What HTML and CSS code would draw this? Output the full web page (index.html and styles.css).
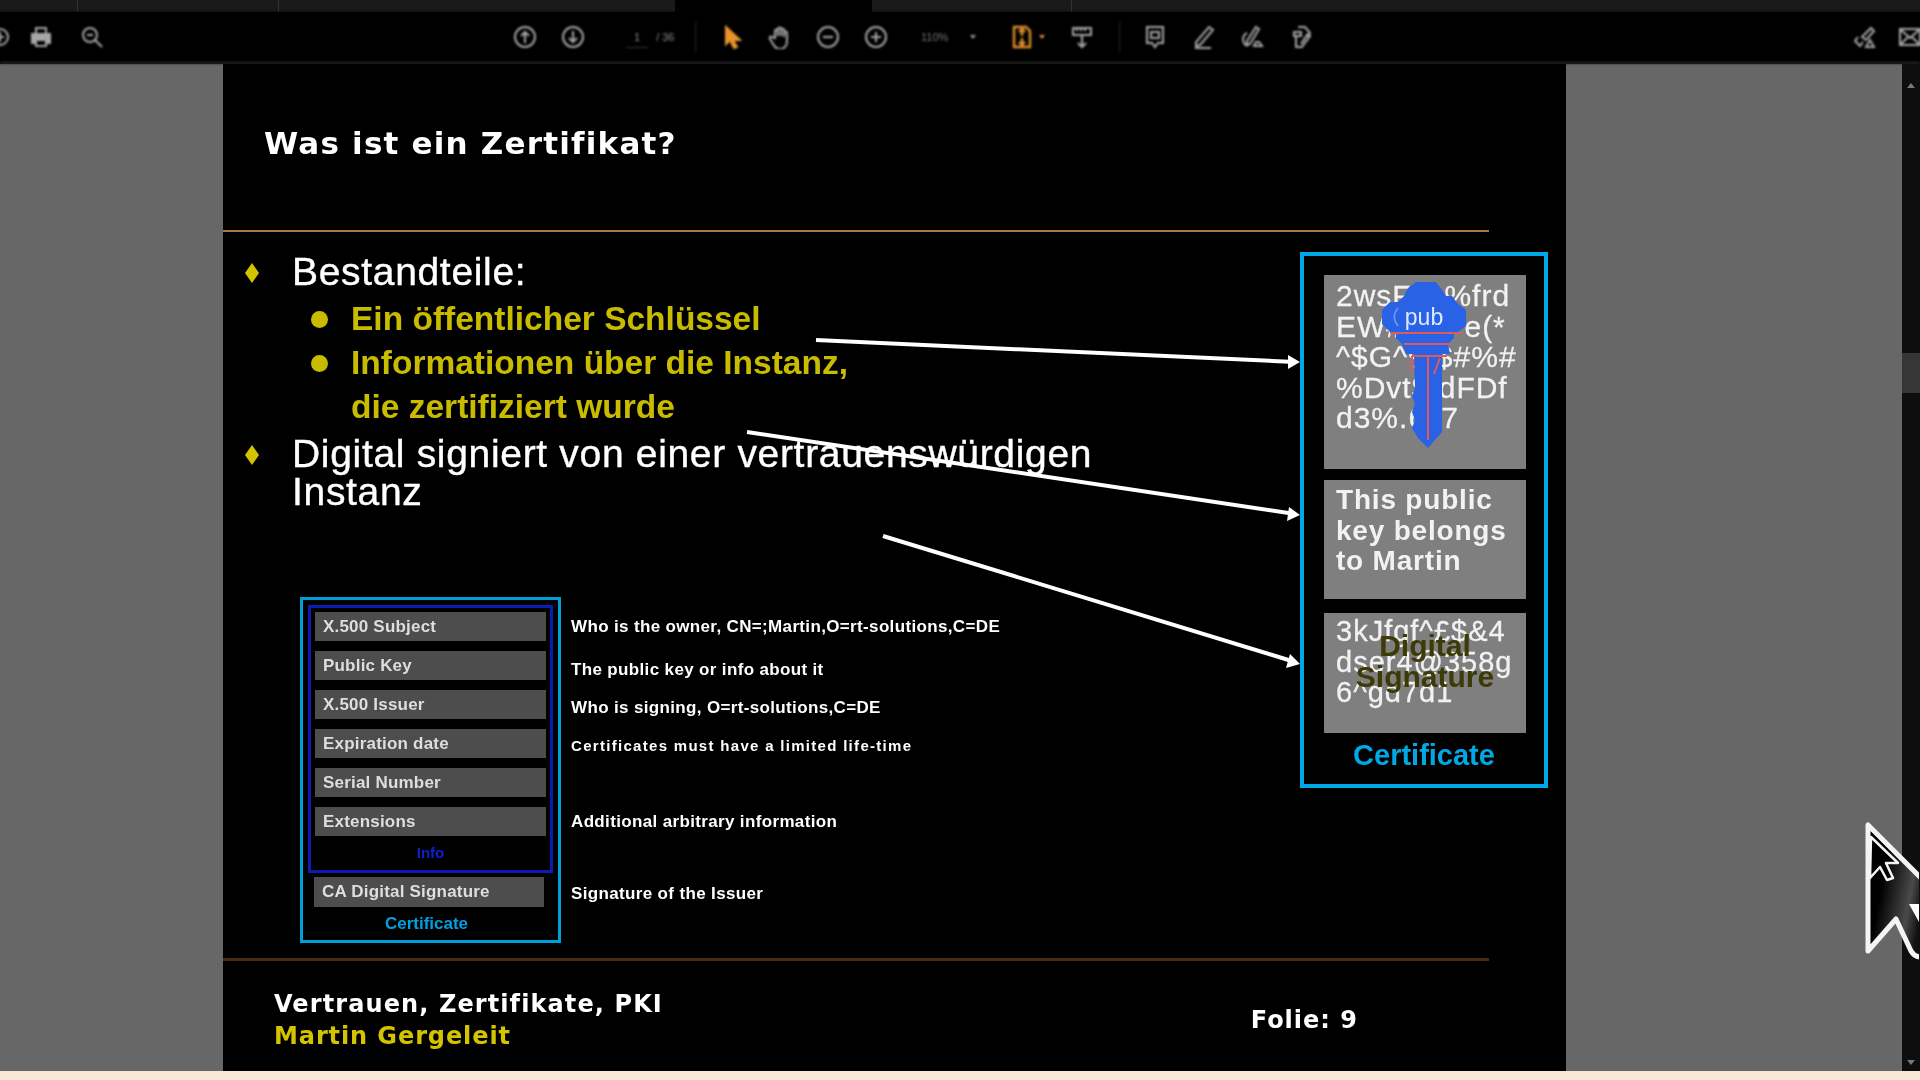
FILE: index.html
```html
<!DOCTYPE html>
<html lang="de">
<head>
<meta charset="utf-8">
<title>Was ist ein Zertifikat?</title>
<link rel="stylesheet" href="styles.css">
</head>
<body>
<div class="app">
  <div class="tabs">
    <div class="tab tab-a"></div>
    <div class="tab tab-b"></div>
    <div class="tab tab-c"></div>
    <div class="tab tab-active"></div>
    <div class="tab tab-d"></div>
    <div class="tab tab-e"></div>
  </div>
  <div class="toolbar">
    <div class="tool-group group-left">
      <svg class="icon" viewBox="0 0 24 24"><circle cx="12" cy="12" r="8"/><path d="M12 7v10M8 12h8"/></svg>
      <svg class="icon" viewBox="0 0 24 24"><path class="fill" d="M3 9h18v9h-3v-3H6v3H3z"/><path d="M7 9V3h10v6M7 15h10v6H7z"/></svg>
      <svg class="icon icon-search" viewBox="0 0 24 24"><circle cx="10" cy="10" r="7"/><path d="M15 15l7 7M7 10h6"/></svg>
    </div>
    <div class="tool-group group-nav">
      <svg class="icon" viewBox="0 0 24 24"><circle cx="12" cy="12" r="10"/><path d="M12 18V7M8 11l4-4 4 4"/></svg>
      <svg class="icon" viewBox="0 0 24 24"><circle cx="12" cy="12" r="10"/><path d="M12 6v11M8 13l4 4 4-4"/></svg>
    </div>
    <div class="page-field"><span class="page-now">1</span><span class="page-total">/ 36</span></div>
    <div class="tool-sep"></div>
    <div class="tool-group group-view">
      <svg class="icon" viewBox="0 0 24 24"><path class="orange" d="M6 2l14 13h-7l4 7-3 1-4-8-4 4z"/></svg>
      <svg class="icon" viewBox="0 0 24 24"><path d="M7 13V6a1.5 1.5 0 0 1 3 0v5-7a1.500 1.500 0 0 1 3 0v7-6a1.500 1.500 0 0 1 3 0v7-4a1.500 1.500 0 0 1 3 0v8c0 5-3 8-7 8s-5-2-7-5l-3-5c-1-2 1-3 2-2z"/></svg>
      <svg class="icon" viewBox="0 0 24 24"><circle cx="12" cy="12" r="10"/><path d="M7 12h10"/></svg>
      <svg class="icon" viewBox="0 0 24 24"><circle cx="12" cy="12" r="10"/><path d="M7 12h10M12 7v10"/></svg>
    </div>
    <div class="zoom-field"><span>110%</span><span class="caret"></span></div>
    <div class="fit-tool">
      <svg class="icon" viewBox="0 0 24 24"><path class="stroke-orange" d="M4 2h12l4 4v16H4zM9 7l3-3 3 3M12 4v7M9 17l3 3 3-3M12 20v-7"/></svg>
      <span class="caret caret-orange"></span>
    </div>
    <svg class="icon icon-ruler" viewBox="0 0 24 24"><path d="M3 3h18v7H3zM7 3v3M11 3v3M15 3v3M12 10v12M8 18l4 4 4-4"/></svg>
    <div class="tool-sep sep-two"></div>
    <div class="tool-group group-comment">
      <svg class="icon" viewBox="0 0 24 24"><path d="M4 2h16v16h-5l-3 4-3-4H4zM8 7h8v6H8z"/></svg>
      <svg class="icon" viewBox="0 0 24 24"><path d="M17 2l4 3L8 20l-4 1 0-4zM3 23h16"/></svg>
      <svg class="icon" viewBox="0 0 24 24"><path d="M15 2l3 2-9 15-3 1v-4zM6 8a7 7 0 0 0 1 13M13 21h8l-3-4h-3z"/></svg>
      <svg class="icon" viewBox="0 0 24 24"><path d="M8 2h7l5 6-3 3M4 7h7v4H4zM6 11v11h6l8-11-3-1-6 9"/></svg>
    </div>
    <div class="tool-group group-right">
      <svg class="icon" viewBox="0 0 24 24"><path d="M19 3l3 3-8 9-4-3zM6 12l-3 4 5 5 3-4M14 22l4-7 4 7z"/></svg>
      <svg class="icon" viewBox="0 0 24 24"><path d="M2 4h20v16H2zM3 5l9 8 9-8M3 19l7-7M21 19l-7-7"/></svg>
    </div>
  </div>

  <div class="viewer">
    <div class="page-area">
      <section class="slide">
        <header class="slide-head">
          <h1 class="slide-title">Was ist ein Zertifikat?</h1>
        </header>

        <div class="slide-body">
          <div class="slide-left">
            <div class="point"><span class="diamond"></span>Bestandteile:</div>
            <div class="sub sub-first"><span class="dot"></span>Ein öffentlicher Schlüssel</div>
            <div class="sub"><span class="dot"></span>Informationen über die Instanz,</div>
            <div class="sub">die zertifiziert wurde</div>
            <div class="point point-two"><span class="diamond"></span>Digital signiert von einer vertrauenswürdigen<br>Instanz</div>

            <div class="fields">
              <div class="cert-outer">
                <div class="cert-info">
                  <div class="field">X.500 Subject</div>
                  <div class="field">Public Key</div>
                  <div class="field">X.500 Issuer</div>
                  <div class="field">Expiration date</div>
                  <div class="field">Serial Number</div>
                  <div class="field">Extensions</div>
                  <div class="info-label">Info</div>
                </div>
                <div class="field field-ca">CA Digital Signature</div>
                <div class="cert-label">Certificate</div>
              </div>
              <div class="notes">
                <div class="note">Who is the owner, CN=;Martin,O=rt-solutions,C=DE</div>
                <div class="note">The public key or info about it</div>
                <div class="note">Who is signing, O=rt-solutions,C=DE</div>
                <div class="note note-small">Certificates must have a limited life-time</div>
                <div class="note">Additional arbitrary information</div>
                <div class="note">Signature of the Issuer</div>
              </div>
            </div>
          </div>

          <aside class="cert-card">
            <div class="cert-box box-key">
              <div>2wsF#^%frd</div>
              <div>EW#$%^e(*</div>
              <div>^$G^%$#%#</div>
              <div>%Dvt$.dFDf</div>
              <div>d3%.6^7</div>
              <svg class="key" viewBox="0 0 84 166">
                <path class="key-blue" d="M26 6L34 0H54L60 8 64 14H70L76 22 84 28V44L76 50H72V56L66 62 68 72H60V150L46 166 36 156 30 146 33 138 30 130 33 122 30 114 33 106 32 72H24L20 62 14 56V50H8L0 42V28L8 20H16L22 14Z"/>
                <path class="key-red" d="M8 51H80M22 62H68M30 74H65M30 74V90M46 74V158M58 76L52 92"/>
                <path class="key-line" d="M16 26C11 32 11 38 16 44"/>
              </svg>
              <span class="key-text">pub</span>
            </div>
            <div class="cert-box box-text">
              <div>This public</div>
              <div>key belongs</div>
              <div>to Martin</div>
            </div>
            <div class="cert-box box-sign">
              <div>3kJfgf^£$&amp;4</div>
              <div>dser4@358g</div>
              <div>6^gd7d1</div>
              <div class="sign-over">Digital<br>Signature</div>
            </div>
            <div class="card-label">Certificate</div>
          </aside>
        </div>

        <footer class="slide-foot">
          <div class="foot-left">
            <div class="foot-title">Vertrauen, Zertifikate, PKI</div>
            <div class="foot-author">Martin Gergeleit</div>
          </div>
          <div class="foot-page">Folie: 9</div>
        </footer>

        <svg class="arrows" viewBox="0 0 1343 1007">
          <path d="M593 276L1072 298"/>
          <path d="M524 368L1072 450"/>
          <path d="M660 472L1072 598"/>
          <path class="head" d="M1077 298L1065 291V305Z"/>
          <path class="head" d="M1077 451L1066 443L1064 457Z"/>
          <path class="head" d="M1077 600L1067 590L1063 604Z"/>
        </svg>
      </section>
    </div>
    <div class="scrollbar">
      <span class="scroll-arrow arrow-up"></span>
      <span class="scroll-thumb"></span>
      <span class="scroll-arrow arrow-down"></span>
    </div>
  </div>
  <div class="statusbar"></div>

  <svg class="cursor" viewBox="0 0 54 140">
    <defs>
      <linearGradient id="cursorShade" x1="0" y1="0" x2="1" y2="0.4">
        <stop offset="0.35" stop-color="#000"/>
        <stop offset="0.8" stop-color="#4a4a4a"/>
        <stop offset="1" stop-color="#111"/>
      </linearGradient>
    </defs>
    <path class="cursor-big" d="M3 3V129L31 97 46 129C50 136 56 136 62 134V62Z"/>
    <path class="cursor-wedge" d="M44 82H54V100Z"/>
    <path class="cursor-small" d="M6 15L33 41H21L28 56 22 58 15 45 5 56Z"/>
  </svg>
</div>
</body>
</html>
```
FILE: styles.css
```css
* { box-sizing: border-box; }
html, body { margin: 0; height: 100%; background: #000; overflow: hidden; }
.app {
  position: relative;
  width: 1920px;
  height: 1080px;
  display: flex;
  flex-direction: column;
  overflow: hidden;
  font-family: "Liberation Sans", Arial, sans-serif;
}

/* tab strip */
.tabs { height: 12px; display: flex; background: #1a1a1a; }
.tab { height: 12px; border-right: 1px solid #333; }
.tab-a { width: 78px; }
.tab-b { width: 201px; }
.tab-c { width: 396px; border-right: 0; }
.tab-active { width: 197px; background: #000; border-right: 0; }
.tab-d { width: 200px; }
.tab-e { flex: 1; border-right: 0; }

/* toolbar */
.toolbar {
  height: 52px;
  display: flex;
  align-items: center;
  background: #000;
  border-bottom: 2px solid #2b2b2b;
  filter: blur(1px);
  color: #8a8a8a;
}
.tool-group { display: flex; align-items: center; gap: 24px; }
.icon { width: 24px; height: 24px; flex: none; }
.icon path, .icon circle { fill: none; stroke: #a6a6a6; stroke-width: 2; }
.icon .fill { fill: #a6a6a6; }
.icon .orange { fill: #e8922a; stroke: #e8922a; }
.icon .stroke-orange { stroke: #e0902c; stroke-width: 2.4; }
.group-left { margin-left: -12px; gap: 17px; }
.icon-search { margin-left: 10px; }
.group-nav { margin-left: 409px; }
.page-field {
  width: 48px;
  margin-left: 41px;
  display: flex;
  gap: 14px;
  font-size: 11px;
  line-height: 20px;
}
.page-now { border-bottom: 1px solid #333; padding: 0 8px; }
.page-total { white-space: nowrap; margin-left: -6px; }
.tool-sep { width: 1px; height: 32px; background: #252525; margin-left: 21px; }
.group-view { margin-left: 24px; gap: 24px; }
.zoom-field {
  display: flex;
  align-items: center;
  gap: 22px;
  margin-left: 33px;
  width: 65px;
  font-size: 11px;
  color: #777;
}
.caret { width: 0; height: 0; flex: none; border: 3px solid transparent; border-top: 4px solid #999; border-bottom: 0; }
.caret-orange { border-top-color: #e0902c; }
.fit-tool { display: flex; align-items: center; gap: 5px; margin-left: 24px; }
.icon-ruler { margin-left: 25px; }
.sep-two { margin-left: 25px; }
.group-comment { margin-left: 23px; gap: 25px; }
.group-right { margin-left: auto; gap: 22px; margin-right: -2px; }

/* viewer */
.viewer { flex: 1; display: flex; background: #676767; min-height: 0; }
.page-area { flex: 1; padding-left: 223px; }
.scrollbar {
  width: 18px;
  background: #0e0e0e;
  display: flex;
  flex-direction: column;
  align-items: center;
  padding: 19px 0 6px;
  filter: blur(0.5px);
}
.scroll-thumb { width: 18px; height: 40px; margin-top: 265px; background: #363636; }
.scroll-arrow { width: 0; height: 0; border: 4px solid transparent; }
.arrow-up { border-bottom: 5px solid #777; border-top: 0; }
.arrow-down { border-top: 5px solid #777; border-bottom: 0; margin-top: auto; }
.statusbar { height: 9px; background: #f9e6d5; }

/* slide */
.slide {
  position: relative;
  width: 1343px;
  height: 1007px;
  background: #000;
  display: flex;
  flex-direction: column;
  color: #fff;
  filter: blur(0.7px);
}
.slide-head {
  width: 1266px;
  height: 168px;
  padding: 61px 0 0 41px;
  border-bottom: 2px solid #a87a48;
}
.slide-title {
  margin: 0;
  font: bold 31px/36px "DejaVu Sans", sans-serif;
  letter-spacing: 1.200px;
}
.slide-body { flex: 1; display: flex; min-height: 0; }
.slide-left { width: 1077px; padding-top: 21px; }
.point {
  position: relative;
  margin-left: 69px;
  font-size: 39px;
  line-height: 38px;
  letter-spacing: 0.680px;
  -webkit-text-stroke: 0.4px #fff;
  white-space: nowrap;
}
.point-two { margin-top: 6px; }
.diamond {
  position: absolute;
  left: -47px;
  top: 10px;
  width: 14px;
  height: 20px;
  background: #d4c400;
  clip-path: polygon(50% 0, 100% 50%, 50% 100%, 0 50%);
}
.sub {
  position: relative;
  margin-left: 128px;
  font-size: 33.500px;
  font-weight: bold;
  line-height: 44px;
  color: #c9bc00;
}
.sub-first { margin-top: 6px; }
.dot {
  position: absolute;
  left: -40px;
  top: 14px;
  width: 17px;
  height: 17px;
  border-radius: 50%;
  background: #c9bc00;
}
.fields { display: flex; margin: 86px 0 0 77px; }
.cert-outer {
  width: 261px;
  height: 346px;
  border: 3px solid #009fd8;
  display: flex;
  flex-direction: column;
}
.cert-info {
  width: 245px;
  height: 268px;
  margin: 5px 0 0 5px;
  padding: 4px;
  border: 3px solid #0a1cb4;
  display: flex;
  flex-direction: column;
  gap: 10px;
}
.field {
  height: 29px;
  flex: none;
  padding-left: 8px;
  background: #4d4d4d;
  color: #dedede;
  font-size: 17px;
  font-weight: bold;
  line-height: 29px;
  letter-spacing: 0.200px;
}
.field-ca { width: 230px; height: 30px; margin: 4px 0 0 11px; line-height: 30px; }
.info-label {
  margin-top: -3px;
  text-align: center;
  color: #0a22c8;
  font-size: 15px;
  font-weight: bold;
  line-height: 20px;
}
.cert-label {
  flex: 1;
  padding-right: 8px;
  text-align: center;
  color: #00a0e0;
  font-size: 17px;
  font-weight: bold;
  line-height: 33px;
}
.notes {
  margin-left: 10px;
  padding-top: 11px;
  display: grid;
  grid-template-rows: 43px 38px 38px 76px 72px 38px;
  white-space: nowrap;
}
.note { font-size: 17px; font-weight: bold; line-height: 38px; letter-spacing: 0.350px; }
.note-small { font-size: 15px; letter-spacing: 1.300px; }

/* certificate card */
.cert-card {
  width: 248px;
  height: 536px;
  margin-top: 20px;
  padding: 19px 20px 0;
  border: 4px solid #00a8e6;
  background: #000;
  display: flex;
  flex-direction: column;
}
.cert-box {
  position: relative;
  width: 202px;
  flex: none;
  padding-left: 12px;
  background: #7f7f7f;
  color: #f2f2f2;
  font-size: 30px;
  line-height: 30.600px;
  letter-spacing: 1px;
  white-space: nowrap;
  -webkit-text-stroke: 0.3px #f2f2f2;
}
.box-key { height: 194px; padding-top: 6px; }
.box-text { height: 119px; margin-top: 11px; padding-top: 5px; font-size: 28px; font-weight: bold; letter-spacing: 0.800px; -webkit-text-stroke: 0; }
.box-sign { height: 120px; margin-top: 14px; padding-top: 3px; overflow: hidden; font-size: 29px; }
.sign-over {
  position: absolute;
  left: 0;
  right: 0;
  top: 18px;
  text-align: center;
  color: #3d3a08;
  font-size: 30px;
  font-weight: bold;
  letter-spacing: 0;
  -webkit-text-stroke: 0;
}
.key { position: absolute; left: 58px; top: 7px; width: 84px; height: 166px; }
.key-blue { fill: #2a62e6; }
.key-red { fill: none; stroke: #e05a5a; stroke-width: 2; }
.key-line { fill: none; stroke: #6a9af0; stroke-width: 1.500px; }
.key-text {
  position: absolute;
  left: 58px;
  width: 84px;
  top: 30px;
  text-align: center;
  font-size: 23px;
  line-height: 24px;
  letter-spacing: 0;
  color: #dfe8ff;
  -webkit-text-stroke: 0;
}
.card-label {
  text-align: center;
  color: #00a8e6;
  font-size: 29px;
  font-weight: bold;
  line-height: 44px;
}

/* footer */
.slide-foot {
  width: 1266px;
  height: 113px;
  flex: none;
  border-top: 3px solid #4a2a0e;
  padding: 27px 0 0 51px;
  display: flex;
  justify-content: space-between;
}
.foot-title, .foot-author {
  font: bold 24px/32px "DejaVu Sans", sans-serif;
  letter-spacing: 1.100px;
}
.foot-author { color: #d4c400; letter-spacing: 0.900px; }
.foot-page {
  margin: 16px 131px 0 0;
  font: bold 24px/32px "DejaVu Sans", sans-serif;
  letter-spacing: 1px;
}

/* overlays */
.arrows { position: absolute; left: 0; top: 0; width: 1343px; height: 1007px; pointer-events: none; }
.arrows path { fill: none; stroke: #fff; stroke-width: 4; }
.arrows .head { fill: #fff; stroke: none; }
.cursor { position: absolute; left: 1865px; top: 822px; width: 54px; height: 140px; overflow: hidden; filter: blur(0.6px); }
.cursor-big { fill: url(#cursorShade); stroke: #f4f4f4; stroke-width: 5; stroke-linejoin: round; }
.cursor-wedge { fill: #fff; }
.cursor-small { fill: #000; stroke: #f4f4f4; stroke-width: 2.500px; stroke-linejoin: round; }
```
